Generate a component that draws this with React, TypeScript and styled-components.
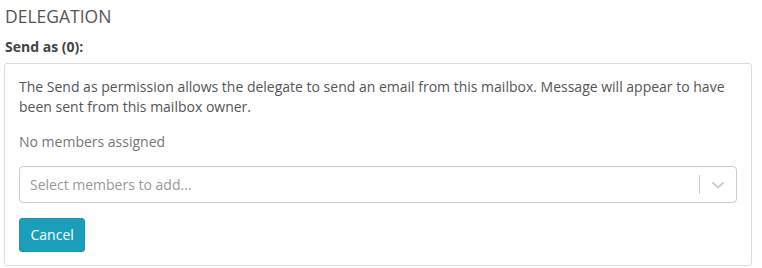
import React from "react";
import styled, { createGlobalStyle } from "styled-components";

const Global = createGlobalStyle`
  body {
    margin: 0;
    background: #fff;
    font-family: "Open Sans", "Noto Sans", sans-serif;
    color: #555;
  }
`;

const Page = styled.div`
  padding: 4px 10px 0 4px;
`;

const Heading = styled.h3`
  margin: 0 0 0 1px;
  font-size: 17.5px;
  font-weight: 400;
  line-height: 24px;
  color: #555;
  text-transform: uppercase;
`;

const Label = styled.div`
  margin: 10px 0 0 1px;
  font-size: 14px;
  font-weight: 700;
  line-height: 18px;
  color: #444;
`;

const Panel = styled.div`
  margin-top: 7px;
  border: 1px solid #ddd;
  border-radius: 3px;
  padding: 13px 14px 13px 14px;
  display: flex;
  flex-direction: column;
`;

const Description = styled.p`
  margin: 0;
  font-size: 14px;
  line-height: 20px;
  color: #555;
`;

const Empty = styled.p`
  margin: 15px 0 0;
  font-size: 14px;
  line-height: 20px;
  color: #777;
`;

const Select = styled.div`
  margin-top: 14px;
  height: 37px;
  box-sizing: border-box;
  border: 1px solid #ccc;
  border-radius: 4px;
  display: flex;
  align-items: center;
`;

const Placeholder = styled.span`
  flex: 1;
  padding-left: 10px;
  font-size: 14px;
  color: #999;
`;

const Separator = styled.span`
  width: 1px;
  align-self: stretch;
  margin: 8px 0;
  background: #ccc;
`;

const Indicator = styled.span`
  width: 36px;
  display: flex;
  align-items: center;
  justify-content: center;
  color: #ccc;
`;

const Actions = styled.div`
  margin-top: 15px;
  display: flex;
`;

const Button = styled.button`
  height: 34px;
  padding: 0 10.5px;
  border: 1px solid #1899b3;
  border-radius: 3px;
  background: #1a9fba;
  color: #fff;
  font-family: "Open Sans", "Noto Sans", sans-serif;
  font-size: 14px;
  line-height: 20px;
  cursor: pointer;
`;

export default function App() {
  return (
    <>
      <Global />
      <Page>
        <Heading>Delegation</Heading>
        <Label>Send as (0):</Label>
        <Panel>
          <Description>
            The Send as permission allows the delegate to send an email from this mailbox. Message will appear to have
            been sent from this mailbox owner.
          </Description>
          <Empty>No members assigned</Empty>
          <Select>
            <Placeholder>Select members to add...</Placeholder>
            <Separator />
            <Indicator>
              <svg width="14" height="8" viewBox="0 0 14 8" fill="none">
                <path d="M1.5 1.5 L7 6.5 L12.5 1.5" stroke="currentColor" strokeWidth="1.8" />
              </svg>
            </Indicator>
          </Select>
          <Actions>
            <Button>Cancel</Button>
          </Actions>
        </Panel>
      </Page>
    </>
  );
}
